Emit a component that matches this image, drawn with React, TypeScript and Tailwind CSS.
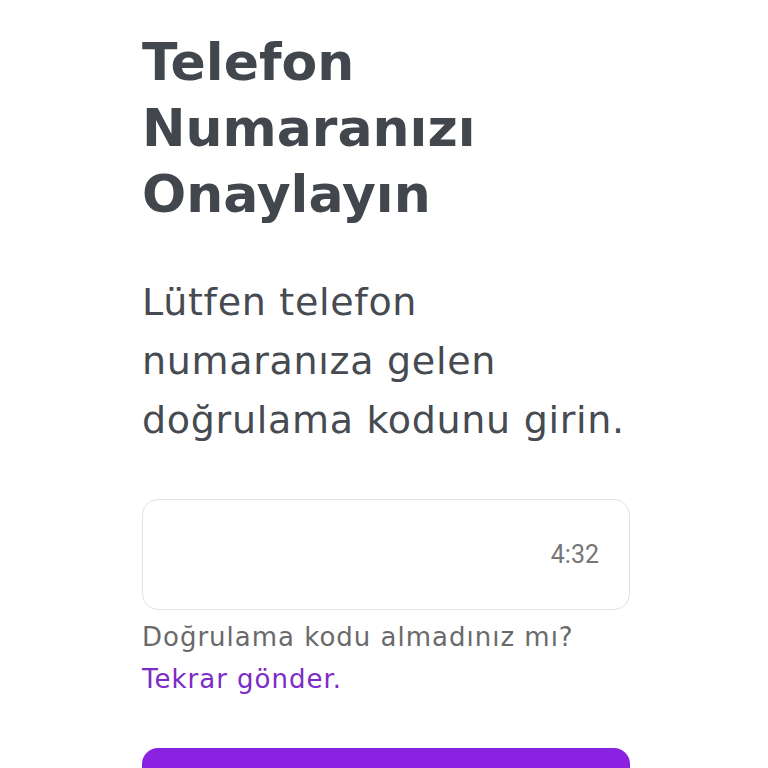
export default function App() {
  return (
    <div className="min-h-screen bg-white font-['DejaVu_Sans',sans-serif] overflow-hidden">
      <div className="ml-[142px] w-[488px] pt-[29px]">
        <h1 className="text-[52px] leading-[66px] font-bold text-[#42464d]">
          Telefon
          <br />
          Numaranızı
          <br />
          Onaylayın
        </h1>

        <p className="mt-[46px] text-[38px] leading-[59px] text-[#464a51] tracking-[0.7px] w-[488px]">
          Lütfen telefon
          <br />
          numaranıza gelen
          <br />
          doğrulama kodunu girin.
        </p>

        <div className="mt-[49px] h-[111px] rounded-[16px] border border-[#e2e2e2] flex items-center justify-end px-[30px]">
          <span className="text-[25px] text-[#767676] font-['Roboto',sans-serif]">4:32</span>
        </div>

        <p className="mt-[6px] text-[26px] leading-[42px] text-[#6a6a6a] tracking-[1px]">
          Doğrulama kodu almadınız mı?
          <br />
          <span className="text-[#7d2bc8]">Tekrar gönder.</span>
        </p>

        <button className="mt-[48px] w-full h-[64px] rounded-[16px] bg-[#8a22e2]" />
      </div>
    </div>
  );
}
